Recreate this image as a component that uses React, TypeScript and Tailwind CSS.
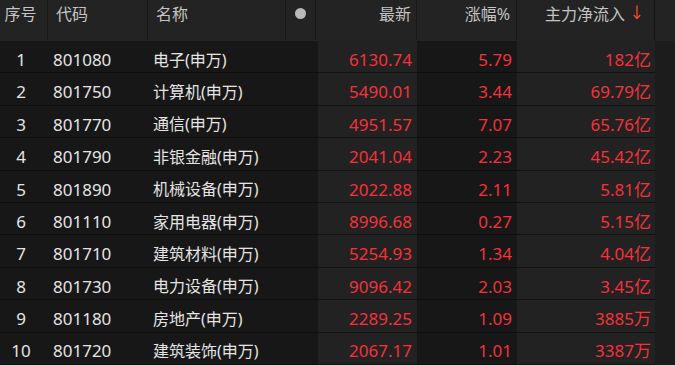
const rows = [
  { no: 1, code: "801080", name: "电子(申万)", last: "6130.74", pct: "5.79", flow: "182亿" },
  { no: 2, code: "801750", name: "计算机(申万)", last: "5490.01", pct: "3.44", flow: "69.79亿" },
  { no: 3, code: "801770", name: "通信(申万)", last: "4951.57", pct: "7.07", flow: "65.76亿" },
  { no: 4, code: "801790", name: "非银金融(申万)", last: "2041.04", pct: "2.23", flow: "45.42亿" },
  { no: 5, code: "801890", name: "机械设备(申万)", last: "2022.88", pct: "2.11", flow: "5.81亿" },
  { no: 6, code: "801110", name: "家用电器(申万)", last: "8996.68", pct: "0.27", flow: "5.15亿" },
  { no: 7, code: "801710", name: "建筑材料(申万)", last: "5254.93", pct: "1.34", flow: "4.04亿" },
  { no: 8, code: "801730", name: "电力设备(申万)", last: "9096.42", pct: "2.03", flow: "3.45亿" },
  { no: 9, code: "801180", name: "房地产(申万)", last: "2289.25", pct: "1.09", flow: "3885万" },
  { no: 10, code: "801720", name: "建筑装饰(申万)", last: "2067.17", pct: "1.01", flow: "3387万" },
];

const font = "font-['Noto_Sans','Noto_Sans_CJK_SC',sans-serif]";

export default function App() {
  return (
    <div className={`h-[365px] w-[675px] overflow-hidden bg-[#171717] ${font}`}>
      {/* header */}
      <div className="flex h-[41px] bg-[#232323] text-[16px] leading-none text-[#c4c4c4]">
        <div className="flex h-[40px] w-[48px] justify-center border-r border-[#171717] pr-[6px] pt-[6px]">序号</div>
        <div className="h-[40px] w-[100px] border-r border-[#171717] pl-[8px] pt-[6px]">代码</div>
        <div className="h-[40px] w-[138px] border-r border-[#171717] pl-[8px] pt-[6px]">名称</div>
        <div className="flex h-[40px] w-[30px] justify-center border-r border-[#171717] pt-[8px]">
          <span className="block h-[11px] w-[11px] rounded-full bg-[#b9b9b9]" />
        </div>
        <div className="h-[40px] w-[101px] border-r border-[#171717] pr-[5px] pt-[6px] text-right">最新</div>
        <div className="h-[40px] w-[100px] border-r border-[#171717] pr-[6px] pt-[6px] text-right">涨幅%</div>
        <div className="flex h-[40px] w-[138px] justify-end gap-[8px] border-r border-[#171717] pr-[13px] pt-[6px]">
          <span>主力净流入</span>
          <svg width="8" height="15" viewBox="0 0 8 15" className="mt-[-1px]">
            <path d="M4 0.5V13.5M0.8 10L4 13.6L7.2 10" fill="none" stroke="#ff4a26" strokeWidth="1.3" />
          </svg>
        </div>
        <div className="flex-1" />
      </div>

      {/* rows */}
      {rows.map((r) => (
        <div key={r.no} className="flex h-[32.4px] text-[#e4e4e4]">
          <div className="flex w-[48px] items-center justify-center border-b border-[#0f0f0f] pr-[6px] pt-[6px] text-[17px]">{r.no}</div>
          <div className="flex w-[100px] items-center border-b border-[#0f0f0f] pl-[5px] pt-[6px] text-[17px]">{r.code}</div>
          <div className="flex w-[138px] items-center border-b border-[#0f0f0f] pl-[5px] pt-[6px] text-[16px]">{r.name}</div>
          <div className="w-[32px] border-b border-[#0f0f0f]" />
          <div className="flex w-[99px] items-center justify-end border-b border-[#121212] bg-[#222222] pr-[5px] pt-[6px] text-[17px] text-[#f5313b]">{r.last}</div>
          <div className="flex w-[100px] items-center justify-end border-b border-[#0f0f0f] pr-[5px] pt-[6px] text-[17px] text-[#f5313b]">{r.pct}</div>
          <div className="flex w-[138px] items-center justify-end border-b border-[#121212] bg-[#222222] pr-[4px] pt-[6px] text-[17px] text-[#f5313b]">{r.flow}</div>
          <div className="flex-1 bg-[#1c1c1c]" />
        </div>
      ))}
    </div>
  );
}
